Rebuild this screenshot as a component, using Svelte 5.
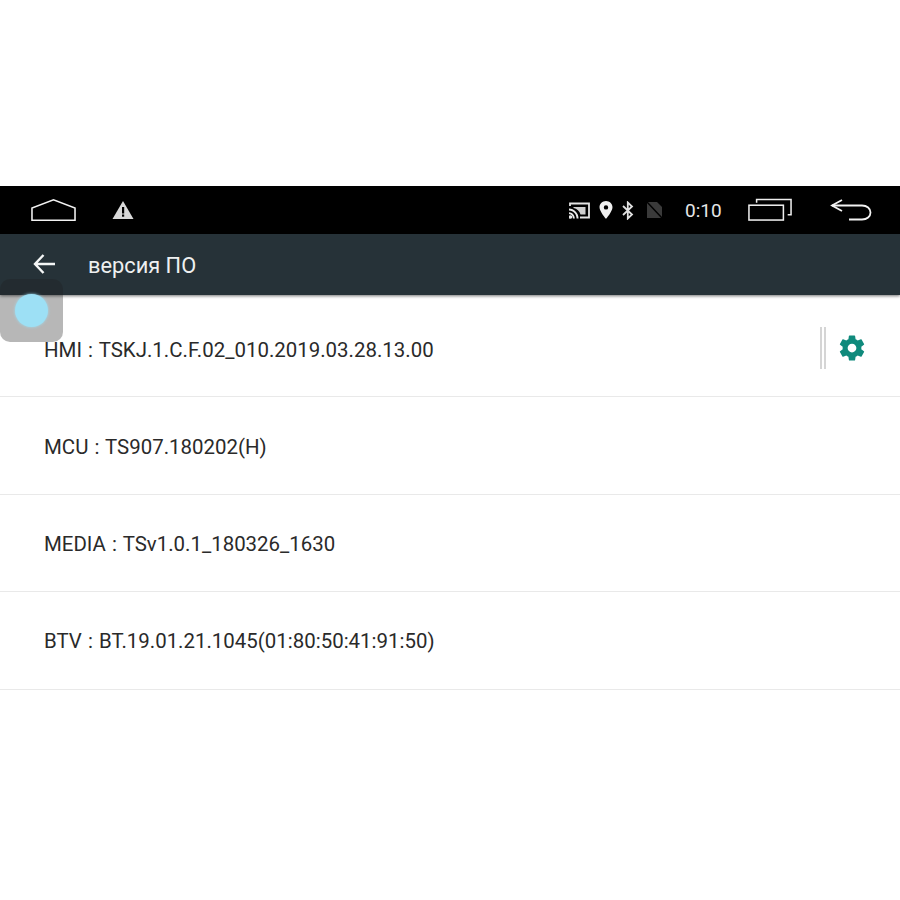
<script>
  const rows = [
    { text: 'HMI : TSKJ.1.C.F.02_010.2019.03.28.13.00', action: true },
    { text: 'MCU : TS907.180202(H)' },
    { text: 'MEDIA : TSv1.0.1_180326_1630' },
    { text: 'BTV : BT.19.01.21.1045(01:80:50:41:91:50)' }
  ];
</script>

<div class="screen">
  <!-- status bar -->
  <div class="statusbar">
    <div class="left">
      <svg class="home" width="45" height="24" viewBox="0 0 46 24">
        <path d="M1 22.500V10L23 1.500L45 10V22.500Z" fill="none" stroke="#f2f2f2" stroke-width="1.600" />
      </svg>
      <svg class="warn" width="22" height="20" viewBox="0 0 22 20">
        <path d="M11 1L21.500 19H.5Z" fill="#d9d9d9" />
        <rect x="10" y="7" width="2.200" height="6.500" fill="#000" />
        <rect x="10" y="14.500" width="2.200" height="2.200" fill="#000" />
      </svg>
    </div>
    <div class="right">
      <svg class="cast" width="21" height="17" viewBox="0 0 21 17">
        <path d="M1 4V1.500H20V15.500H11" fill="none" stroke="#e4e4e4" stroke-width="1.800" />
        <path d="M4.500 5H16.500V12.500H11.500C10.500 9 8 6.500 4.500 6Z" fill="#cfcfcf" />
        <path d="M0 6.500C5 6.500 9.500 11 9.500 16.500H7.600C7.600 12 4.500 8.500 0 8.400Z" fill="#e8e8e8" />
        <path d="M0 10.200C3 10.200 5.800 13 5.800 16.500H3.900C3.900 14 2.300 12.200 0 12.100Z" fill="#e8e8e8" />
        <circle cx="1.500" cy="15" r="1.800" fill="#e8e8e8" />
      </svg>
      <svg class="pin" width="14" height="18" viewBox="0 0 13 18">
        <path fill-rule="evenodd" d="M6.500 0C10 0 13 2.800 13 6.300C13 10.500 6.500 18 6.500 18C6.500 18 0 10.500 0 6.300C0 2.800 3 0 6.500 0ZM6.500 4.200A2.200 2.200 0 1 0 6.500 8.600A2.200 2.200 0 1 0 6.500 4.200Z" fill="#f0f0f0" />
      </svg>
      <svg class="bt" width="12" height="19" viewBox="0 0 12 19">
        <path d="M1 5L10 13.500L5.800 17.500V1.500L10 5.500L1 14" fill="none" stroke="#e0e0e0" stroke-width="1.800" />
      </svg>
      <svg class="sim" width="17" height="18" viewBox="0 0 17 18">
        <path d="M1 1H11L16 6V17H1Z" fill="#3a3a3a" />
        <path d="M0 0L17 18" stroke="#000" stroke-width="1.500" />
      </svg>
      <span class="time">0:10</span>
      <svg class="recent" width="44" height="24" viewBox="0 0 46 24">
        <path d="M9 4.500V1H45V17H41.500" fill="none" stroke="#eee" stroke-width="1.600" />
        <rect x="1" y="7" width="36" height="15.500" fill="none" stroke="#eee" stroke-width="1.600" />
      </svg>
      <svg class="back" width="42" height="24" viewBox="0 0 42 24">
        <path d="M12 2L2 7.500L12 13" fill="none" stroke="#f2f2f2" stroke-width="1.800" />
        <path d="M2 7.500H32C37 7.500 40.500 10.500 40.500 14.500C40.500 18.500 37 21.500 32 21.500H19" fill="none" stroke="#f2f2f2" stroke-width="1.800" />
      </svg>
    </div>
  </div>

  <!-- toolbar -->
  <div class="toolbar">
    <svg width="22" height="20" viewBox="0 0 22 20">
      <path d="M10.500 1L2 10L10.500 19M2 10H22" fill="none" stroke="#f4f6f6" stroke-width="2.400" />
    </svg>
    <span class="title">версия ПО</span>
  </div>

  <!-- list -->
  <div class="list">
    {#each rows as row}
      <div class="row">
        <span>{row.text}</span>
        {#if row.action}
          <div class="action">
            <div class="bars"></div>
            <svg width="30" height="30" viewBox="0 0 24 24">
              <path fill="#0f8a7c" d="M19.430 12.980c.04-.32.07-.64.07-.98s-.03-.66-.07-.98l2.110-1.650c.19-.15.24-.42.12-.64l-2-3.460c-.12-.22-.39-.3-.61-.22l-2.490 1c-.52-.4-1.080-.73-1.690-.98l-.38-2.650C14.460 2.180 14.250 2 14 2h-4c-.25 0-.46.18-.49.420l-.38 2.650c-.61.25-1.170.59-1.690.98l-2.490-1c-.23-.09-.49 0-.61.22l-2 3.460c-.13.220-.07.490.12.640l2.110 1.650c-.04.320-.07.650-.07.980s.03.660.07.980l-2.110 1.650c-.19.150-.24.420-.12.640l2 3.460c.12.220.39.300.61.220l2.490-1c.52.400 1.080.730 1.690.980l.38 2.650c.03.240.24.420.49.420h4c.25 0 .46-.18.49-.42l.38-2.650c.61-.25 1.170-.59 1.690-.98l2.490 1c.23.090.49 0 .61-.22l2-3.460c.12-.22.070-.49-.12-.64l-2.110-1.650zM12 15.500c-1.930 0-3.500-1.570-3.500-3.500s1.570-3.500 3.500-3.500 3.500 1.570 3.500 3.500-1.570 3.500-3.500 3.500z" />
            </svg>
          </div>
        {/if}
      </div>
    {/each}
  </div>

  <!-- floating assist button -->
  <div class="assist"><div class="dot"></div></div>
</div>

<style>
  :global(body) {
    margin: 0;
    background: #fff;
  }

  .screen {
    position: relative;
    width: 900px;
    height: 900px;
    padding-top: 186px;
    box-sizing: border-box;
    background: #fff;
    font-family: Roboto, "Liberation Sans", sans-serif;
    overflow: hidden;
  }

  .statusbar {
    height: 48px;
    background: #000;
    display: flex;
    align-items: center;
    justify-content: space-between;
    padding: 0 28px 0 31px;
  }

  .left,
  .right {
    display: flex;
    align-items: center;
  }

  .left {
    gap: 36px;
  }

  .pin {
    margin-left: 9px;
  }

  .bt {
    margin-left: 9px;
  }

  .sim {
    margin-left: 12px;
  }

  .time {
    margin-left: 22px;
    color: #e6e6e6;
    font-size: 19px;
    width: 38px;
  }

  .recent {
    margin-left: 25px;
  }

  .back {
    margin-left: 38px;
  }

  .toolbar {
    height: 61px;
    background: #263238;
    display: flex;
    align-items: center;
    padding: 0 0 1px 33px;
    box-sizing: border-box;
    gap: 33px;
    box-shadow: 0 1px 3px rgba(0, 0, 0, 0.55);
    position: relative;
  }

  .title {
    color: #eef0f0;
    font-size: 21.8px;
    padding-top: 2px;
  }

  .row {
    height: 97.4px;
    box-sizing: border-box;
    border-bottom: 1px solid #e9e9e9;
    display: flex;
    align-items: center;
    justify-content: space-between;
    padding: 10px 33px 8px 44px;
    font-size: 20.45px;
    word-spacing: 1px;
    color: #2a2a2a;
  }

  .row:first-child {
    height: 102.4px;
    padding-top: 16px;
  }

  .action {
    display: flex;
    align-items: center;
    gap: 11px;
    margin-bottom: 4px;
  }

  .bars {
    width: 2px;
    height: 42px;
    border-left: 2px solid #d5d5d5;
    border-right: 2px solid #d5d5d5;
  }

  .assist {
    position: absolute;
    left: 0;
    top: 279px;
    width: 63px;
    height: 63px;
    border-radius: 10px;
    background: rgba(30, 30, 30, 0.32);
    display: flex;
    align-items: center;
    justify-content: center;
  }

  .dot {
    width: 33px;
    height: 33px;
    margin-right: 1px;
    border-radius: 50%;
    background: #9de0f5;
    box-shadow: 0 0 3px #9de0f5;
  }
</style>
